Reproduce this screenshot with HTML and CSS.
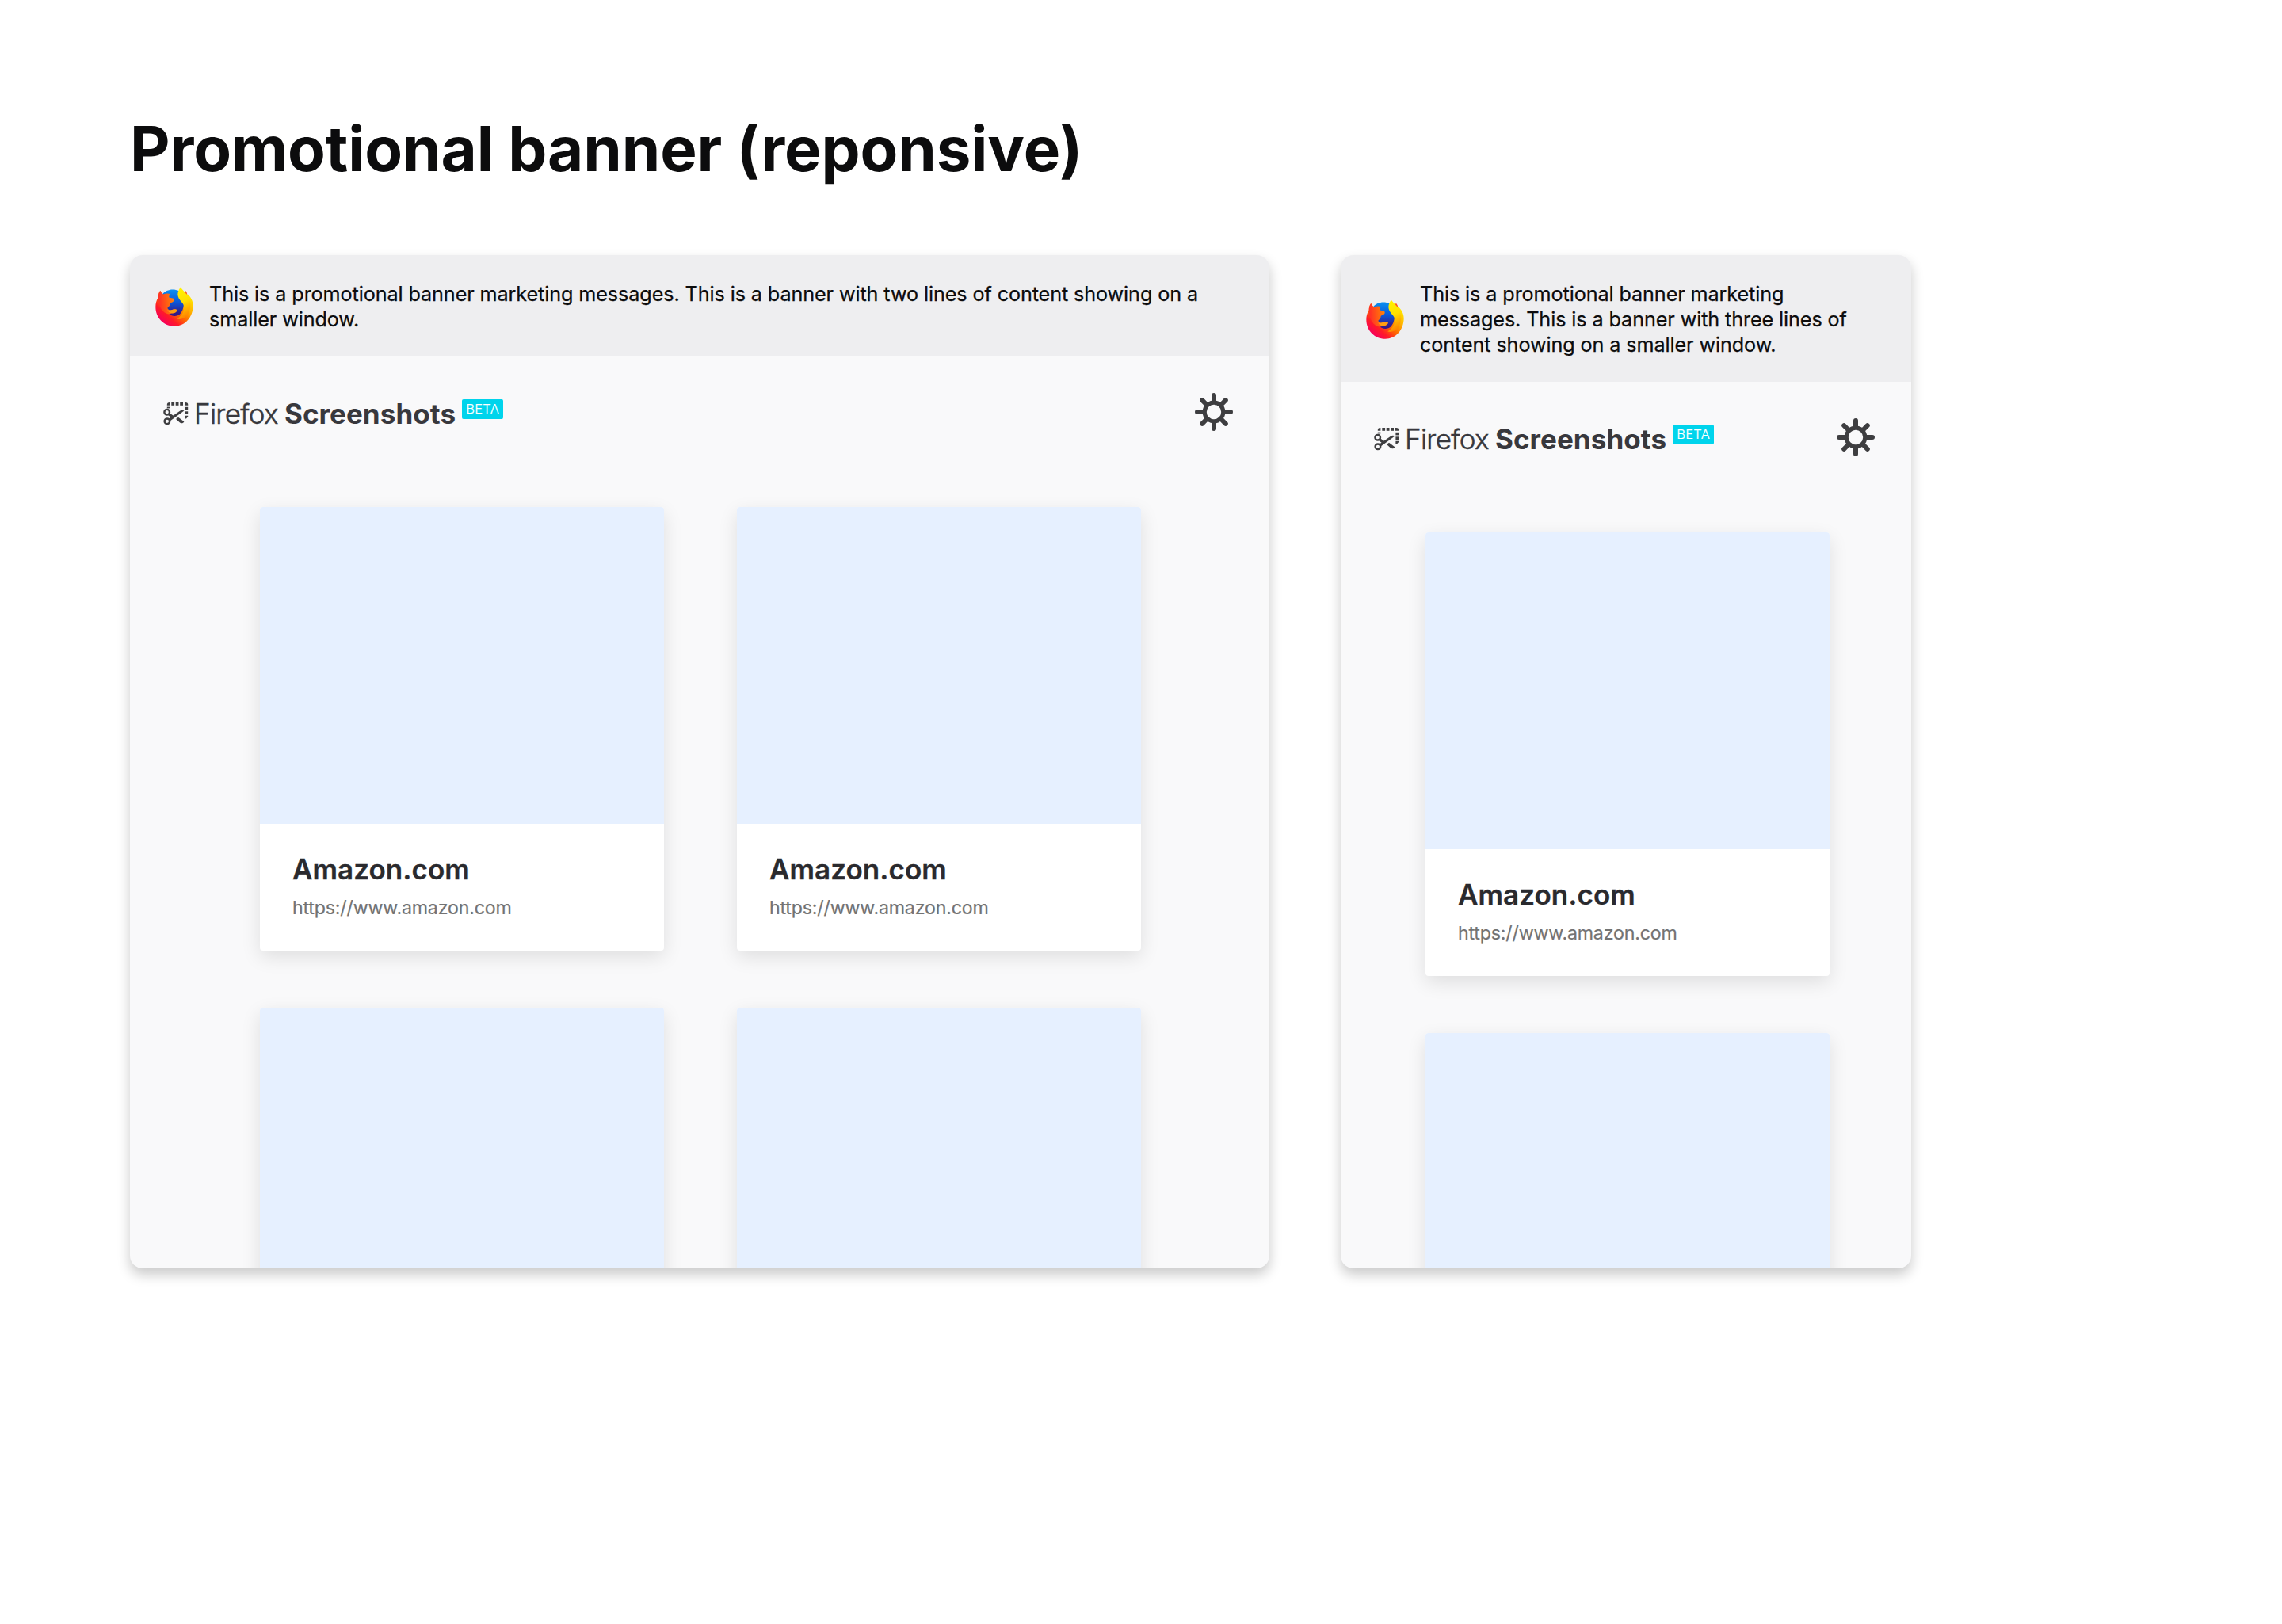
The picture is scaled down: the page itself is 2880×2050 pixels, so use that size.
FILE: index.html
```html
<!DOCTYPE html>
<html lang="en">
<head>
<meta charset="utf-8">
<title>Promotional banner (reponsive)</title>
<link rel="stylesheet" href="styles.css">
</head>
<body>
<svg class="defs" width="0" height="0" aria-hidden="true">
  <defs>
    <linearGradient id="fx-body" x1="0.85" y1="0.1" x2="0.15" y2="0.85">
      <stop offset="0" stop-color="#ffe900"/>
      <stop offset="0.3" stop-color="#ffb000"/>
      <stop offset="0.55" stop-color="#ff6a00"/>
      <stop offset="0.78" stop-color="#ff1a28"/>
      <stop offset="1" stop-color="#f6005c"/>
    </linearGradient>
    <linearGradient id="fx-globe" x1="0.5" y1="0" x2="0.5" y2="1">
      <stop offset="0" stop-color="#0a90f0"/>
      <stop offset="0.5" stop-color="#0a55d8"/>
      <stop offset="0.85" stop-color="#30208f"/>
      <stop offset="1" stop-color="#3a1480"/>
    </linearGradient>
    <linearGradient id="fx-flame" x1="0.4" y1="0" x2="0.6" y2="1">
      <stop offset="0" stop-color="#fff200"/>
      <stop offset="0.45" stop-color="#ffe000"/>
      <stop offset="0.75" stop-color="#ffa800"/>
      <stop offset="1" stop-color="#ff7a00"/>
    </linearGradient>
    <linearGradient id="fx-head" x1="0" y1="0.5" x2="1" y2="0.4">
      <stop offset="0" stop-color="#ff2a2a"/>
      <stop offset="0.5" stop-color="#ff6410"/>
      <stop offset="1" stop-color="#ff9408"/>
    </linearGradient>
    <symbol id="firefox" viewBox="34 37 144 149">
      <path fill="#ff5a1c" d="M147 50 C153 56 155 62 155 70 L140 70 Z"/>
      <path fill="url(#fx-body)" d="M53 51 C54 57 57 62 62 65 L121 62 L158 66 C168 76 177 90 177 108 C177 152 146 186 107 186 C66 186 35 154 35 113 C35 100 38 88 45 77 C45 67 48 57 53 51 Z"/>
      <path fill="url(#fx-globe)" d="M60 66 C74 48 99 42 124 52 L142 96 C142 112 138 130 128 139 C116 151 94 150 84 136 L70 108 Z"/>
      <path fill="url(#fx-head)" d="M53 51 C56 57 59 62 64 65 C72 62 82 60 91 64 C87 68 85 72 86 77 L103 81 C107 86 105 91 100 94 L91 98 C88 102 91 106 87 109 L80 117 C83 124 88 126 97 124 C105 121 112 120 118 126 C111 136 104 138 95 137 C91 139 89 141 86 139 C76 140 64 134 56 120 C49 108 46 90 45 77 C45 67 48 57 53 51 Z"/>
      <path fill="#ff9d12" d="M80 124 C88 127 94 125 100 123 C107 121 114 122 118 126 C111 135 103 138 95 136 C88 135 83 131 80 124 Z"/>
      <path fill="url(#fx-flame)" d="M129 38 C137 49 151 60 160 76 C171 96 168 128 153 146 C144 156 131 162 116 158 C136 145 146 128 142 108 C139 95 120 86 119 66 C119 54 125 45 129 38 Z"/>
    </symbol>
    <symbol id="clip" viewBox="0 0 32 30">
      <g fill="currentColor">
        <path d="M4.8 4.8 V4 A3 3 0 0 1 7.8 1 H8.4 V4.8 Z"/>
        <rect x="10.3" y="1" width="3.8" height="3.8"/>
        <rect x="15.7" y="1" width="3.8" height="3.8"/>
        <rect x="21.2" y="1" width="3.8" height="3.8"/>
        <path d="M27 1 H28.3 A3 3 0 0 1 31.3 4 V4.8 H27 Z"/>
        <rect x="27.4" y="6.8" width="3.8" height="3.6"/>
        <rect x="27.4" y="12.3" width="3.8" height="3.7"/>
        <path d="M27.4 17.8 H31.2 V19 L29 21.6 H27.4 Z"/>
        <rect x="4.8" y="6.6" width="3.6" height="1.8"/>
        <path d="M6.9 21.4 L21.4 11.4 C23 10.5 25 10.5 26.4 11.5 L8.6 24.6 Z"/>
        <path d="M8.2 14.6 L14.6 19 L11.4 21.2 L6.4 17.2 Z"/>
        <path d="M16 22 L19 19.8 L26.3 25.2 C25.4 27.4 22.7 27.8 21 26.5 Z"/>
      </g>
      <g fill="none" stroke="currentColor" stroke-width="2.4">
        <circle cx="4.7" cy="13.2" r="3.3"/>
        <circle cx="4.9" cy="24.8" r="3.3"/>
      </g>
    </symbol>
    <symbol id="gear" viewBox="-24 -24 48 48">
      <circle r="11.8" fill="none" stroke="currentColor" stroke-width="5.2"/>
      <path fill="none" stroke="currentColor" stroke-width="6" stroke-linecap="round" d="M0 -21V-13M0 21V13M-21 0H-13M21 0H13M-14.8 -14.8L-9 -9M14.8 -14.8L9 -9M-14.8 14.8L-9 9M14.8 14.8L9 9"/>
    </symbol>
  </defs>
</svg>

<h1 class="page-title">Promotional banner (reponsive)</h1>

<main class="panels">
  <section class="panel panel-wide">
    <div class="banner">
      <svg class="banner-logo"><use href="#firefox"/></svg>
      <p class="banner-text">This is a promotional banner marketing messages. This is a banner with two lines of content showing on a<br>smaller window.</p>
    </div>
    <header class="header">
      <div class="brand">
        <svg class="brand-icon"><use href="#clip"/></svg>
        <span class="brand-light">Firefox</span>
        <span class="brand-bold">Screenshots</span>
        <span class="badge">BETA</span>
      </div>
      <svg class="gear"><use href="#gear"/></svg>
    </header>
    <div class="shots">
      <article class="shot">
        <div class="thumb"></div>
        <div class="shot-info"><h2 class="shot-title">Amazon.com</h2><p class="shot-url">https://www.amazon.com</p></div>
      </article>
      <article class="shot">
        <div class="thumb"></div>
        <div class="shot-info"><h2 class="shot-title">Amazon.com</h2><p class="shot-url">https://www.amazon.com</p></div>
      </article>
      <article class="shot"><div class="thumb"></div></article>
      <article class="shot"><div class="thumb"></div></article>
    </div>
  </section>

  <section class="panel panel-narrow">
    <div class="banner">
      <svg class="banner-logo"><use href="#firefox"/></svg>
      <p class="banner-text">This is a promotional banner marketing<br>messages. This is a banner with three lines of<br>content showing on a smaller window.</p>
    </div>
    <header class="header">
      <div class="brand">
        <svg class="brand-icon"><use href="#clip"/></svg>
        <span class="brand-light">Firefox</span>
        <span class="brand-bold">Screenshots</span>
        <span class="badge">BETA</span>
      </div>
      <svg class="gear"><use href="#gear"/></svg>
    </header>
    <div class="shots">
      <article class="shot">
        <div class="thumb"></div>
        <div class="shot-info"><h2 class="shot-title">Amazon.com</h2><p class="shot-url">https://www.amazon.com</p></div>
      </article>
      <article class="shot"><div class="thumb"></div></article>
    </div>
  </section>
</main>
</body>
</html>
```
FILE: styles.css
```css
* {
  box-sizing: border-box;
}

body {
  min-height: 2050px;
  margin: 0;
  padding: 140px 164px 0;
  background: #fff;
  color: #0c0c0d;
  font-family: Inter, "Liberation Sans", sans-serif;
}

h1,
h2,
p {
  margin: 0;
}

svg {
  display: block;
  flex: none;
}

.defs {
  position: absolute;
}

.page-title {
  margin-bottom: 86px;
  font-size: 78px;
  font-weight: 700;
  line-height: 96px;
  letter-spacing: -0.09px;
}

.panels {
  display: flex;
  gap: 90px;
}

.panel {
  height: 1279px;
  overflow: hidden;
  border-radius: 16px;
  background: #f9f9fa;
  box-shadow: 0 8px 16px rgba(12, 12, 13, 0.22);
}

.panel-wide {
  width: 1438px;
}

.panel-narrow {
  width: 720px;
}

.banner {
  display: flex;
  align-items: center;
  gap: 20px;
  padding: 33px 32px 31px;
  background: #eeeef0;
}

.banner-logo {
  width: 48px;
  height: 50px;
}

.banner-text {
  font-size: 25.2px;
  line-height: 32px;
  letter-spacing: -0.103px;
  white-space: nowrap;
  -webkit-text-stroke: 0.25px currentColor;
}

.header {
  display: flex;
  align-items: flex-start;
  justify-content: space-between;
  height: 190px;
  padding: 46px 46px 0 42px;
}

.brand {
  display: flex;
  align-items: flex-start;
  margin-top: 5px;
  color: #38383d;
  font-size: 35px;
  line-height: 42px;
}

.brand-icon {
  width: 32px;
  height: 30px;
  margin: 6px 7px 0 0;
  color: #3e3e40;
}

.brand-light {
  margin-right: 8px;
  font-weight: 300;
  letter-spacing: -0.7px;
  -webkit-text-stroke: 0.5px currentColor;
}

.brand-bold {
  margin-right: 8px;
  font-weight: 700;
  letter-spacing: 0.07px;
}

.badge {
  width: 52px;
  height: 25px;
  margin-top: 3px;
  border-radius: 2px;
  background: #00d4ec;
  color: #fff;
  font-size: 16.5px;
  font-weight: 300;
  line-height: 25px;
  letter-spacing: 0.3px;
  text-align: center;
  -webkit-text-stroke: 0.2px currentColor;
}

.gear {
  width: 48px;
  height: 48px;
  color: #3e3e40;
}

.shots {
  display: grid;
  gap: 72px 92px;
}

.panel-wide .shots {
  grid-template-columns: 510px 510px;
  padding-left: 164px;
}

.panel-narrow .shots {
  grid-template-columns: 510px;
  padding-left: 107px;
}

.shot {
  height: 560px;
  overflow: hidden;
  border-radius: 4px;
  background: #fff;
  box-shadow: 0 8px 24px rgba(12, 12, 13, 0.11);
}

.thumb {
  height: 400px;
  background: #e6f0ff;
}

.shot-info {
  padding: 35px 40px 0 41px;
}

.shot-title {
  color: #2a2a2e;
  font-size: 35px;
  font-weight: 600;
  line-height: 44px;
  letter-spacing: 0.05px;
  -webkit-text-stroke: 0.3px currentColor;
}

.shot-url {
  margin-top: 13px;
  color: #737373;
  font-size: 23.2px;
  line-height: 28px;
  letter-spacing: -0.18px;
  -webkit-text-stroke: 0.2px currentColor;
}
```
